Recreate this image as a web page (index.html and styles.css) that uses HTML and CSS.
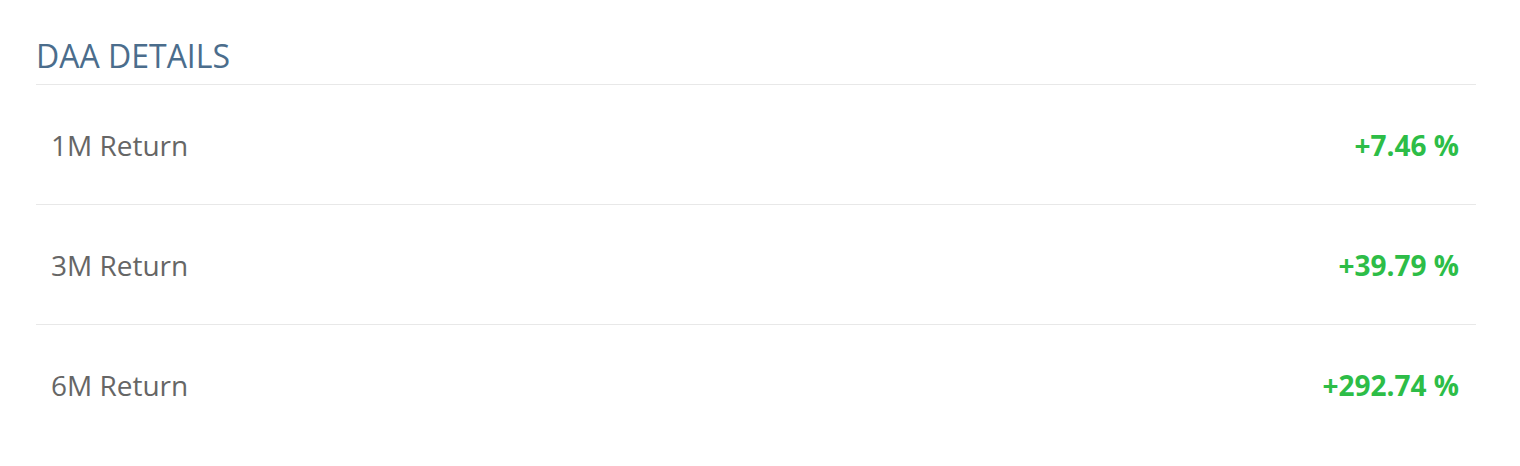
FILE: index.html
```html
<!DOCTYPE html>
<html lang="en">
<head>
  <meta charset="UTF-8">
  <title>DAA Details</title>
  <link rel="stylesheet" href="styles.css">
</head>
<body>
  <div class="details">
    <h2 class="details-title">DAA DETAILS</h2>

    <div class="detail-row">
      <span class="detail-label">1M Return</span>
      <span class="detail-value up">+7.46 %</span>
    </div>
    <div class="detail-row">
      <span class="detail-label">3M Return</span>
      <span class="detail-value up">+39.79 %</span>
    </div>
    <div class="detail-row">
      <span class="detail-label">6M Return</span>
      <span class="detail-value up">+292.74 %</span>
    </div>
  </div>
</body>
</html>
```

FILE: styles.css
```css
body {
  margin: 0;
  background: #fff;
  font-family: "Open Sans", "Liberation Sans", sans-serif;
}

.details {
  width: 1440px;
  padding: 36px 0 0 36px;
}

.details-title {
  margin: 0;
  height: 48px;
  font-size: 32px;
  font-weight: 400;
  line-height: 40px;
  color: #4b6d8c;
  border-bottom: 1px solid #e8e8e8;
}

.detail-row {
  display: flex;
  justify-content: space-between;
  align-items: center;
  height: 119px;
  padding: 0 17px 0 15px;
  border-bottom: 1px solid #e8e8e8;
}

.detail-row:last-child {
  border-bottom: none;
}

.detail-label {
  font-size: 28px;
  color: #666;
}

.detail-value {
  font-size: 28px;
  font-weight: 700;
}

.up {
  color: #2dbd47;
}
```
